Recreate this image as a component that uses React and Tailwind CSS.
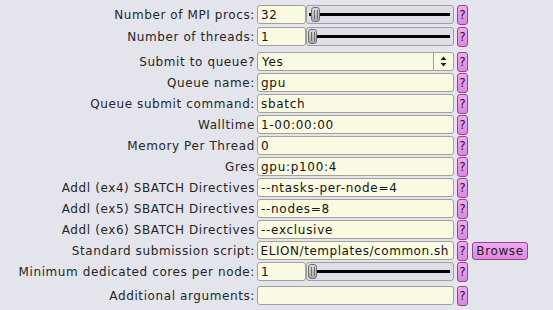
import React from "react";

const font = { fontFamily: '"DejaVu Sans", Verdana, sans-serif' };

function Help() {
  return (
    <div className="ml-[3px] flex h-[20px] w-[11px] shrink-0 items-center justify-center rounded-[3px] border border-[#8a4a8a] bg-gradient-to-b from-[#f4a8f4] to-[#e086e0] text-[12px] leading-none text-[#202020]">
      ?
    </div>
  );
}

function Label({ children }) {
  return (
    <div className="w-[257px] shrink-0 pr-[2px] text-right text-[12px] leading-none tracking-[0.6px] text-[#262626] whitespace-nowrap">
      {children}
    </div>
  );
}

function Input({ value, className = "w-[197px] px-[3px] tracking-[0.7px]" }) {
  return (
    <div
      className={`flex h-[19px] shrink-0 items-center overflow-hidden whitespace-nowrap rounded-[3px] border border-[#a0a0a0] bg-[#fafae2] text-[12px] leading-none text-[#141414] ${className}`}
    >
      {value}
    </div>
  );
}

function Slider({ offset }) {
  return (
    <div className="relative flex h-[19px] w-[148px] shrink-0 items-center rounded-[3px] border border-[#a0a0a0] bg-[#dedee6]">
      <div className="absolute left-[2px] right-[3px] top-[7px] h-[3px] bg-black" />
      <div
        className="absolute top-[1px] flex h-[15px] w-[9px] items-center justify-center gap-[2px] rounded-[3px] border border-[#707070] bg-gradient-to-b from-[#d8d8d8] to-[#a8a8a8]"
        style={{ left: offset }}
      >
        <div className="h-[9px] w-px bg-[#707070]" />
        <div className="h-[9px] w-px bg-[#707070]" />
      </div>
    </div>
  );
}

function Row({ label, children, className = "" }) {
  return (
    <div className={`flex h-[19px] items-center ${className}`}>
      <Label>{label}</Label>
      {children}
    </div>
  );
}

export default function App() {
  return (
    <div
      className="h-[310px] w-[553px] overflow-hidden bg-[#e4e4ec] pt-[5px]"
      style={font}
    >
      <Row label="Number of MPI procs:">
        <Input value="32" className="w-[49px] px-[3px] tracking-[0.7px]" />
        <Slider offset="4px" />
        <Help />
      </Row>
      <Row label="Number of threads:" className="mt-[3px]">
        <Input value="1" className="w-[49px] px-[3px] tracking-[0.7px]" />
        <Slider offset="1px" />
        <Help />
      </Row>
      <Row label="Submit to queue?" className="mt-[6px]">
        <div className="flex h-[19px] w-[197px] shrink-0 items-center rounded-[3px] border border-[#a0a0a0] bg-[#fafae2] text-[12px] leading-none tracking-[0.7px] text-[#141414]">
          <div className="flex-1 pl-[4px]">Yes</div>
          <div className="flex h-full w-[20px] items-center justify-center border-l border-[#a0a0a0]">
            <svg width="7" height="11" viewBox="0 0 7 11">
              <path d="M3.5 0.5 L6.5 4 L0.5 4 Z" fill="#202020" />
              <path d="M3.5 10.5 L6.5 7 L0.5 7 Z" fill="#202020" />
            </svg>
          </div>
        </div>
        <Help />
      </Row>
      <div className="mt-[2px] flex flex-col gap-[2px]">
        <Row label="Queue name:">
          <Input value="gpu" />
          <Help />
        </Row>
        <Row label="Queue submit command:">
          <Input value="sbatch" />
          <Help />
        </Row>
        <Row label="Walltime">
          <Input value="1-00:00:00" />
          <Help />
        </Row>
        <Row label="Memory Per Thread">
          <Input value="0" />
          <Help />
        </Row>
        <Row label="Gres">
          <Input value="gpu:p100:4" />
          <Help />
        </Row>
        <Row label="Addl (ex4) SBATCH Directives">
          <Input value="--ntasks-per-node=4" />
          <Help />
        </Row>
        <Row label="Addl (ex5) SBATCH Directives">
          <Input value="--nodes=8" />
          <Help />
        </Row>
        <Row label="Addl (ex6) SBATCH Directives">
          <Input value="--exclusive" />
          <Help />
        </Row>
        <Row label="Standard submission script:">
          <Input
            value="ELION/templates/common.sh"
            className="w-[197px] justify-end pl-0 pr-[4px] tracking-[0.55px]"
          />
          <Help />
          <div className="ml-[4px] flex h-[18px] w-[56px] items-center justify-center rounded-[3px] border border-[#8a4a8a] bg-gradient-to-b from-[#f4a8f4] to-[#e086e0] text-[12px] leading-none tracking-[0.6px] text-[#202020]">
            Browse
          </div>
        </Row>
        <Row label="Minimum dedicated cores per node:">
          <Input value="1" className="w-[49px] px-[3px] tracking-[0.7px]" />
          <Slider offset="1px" />
          <Help />
        </Row>
      </div>
      <Row label="Additional arguments:" className="mt-[5px]">
        <Input value="" />
        <Help />
      </Row>
    </div>
  );
}
